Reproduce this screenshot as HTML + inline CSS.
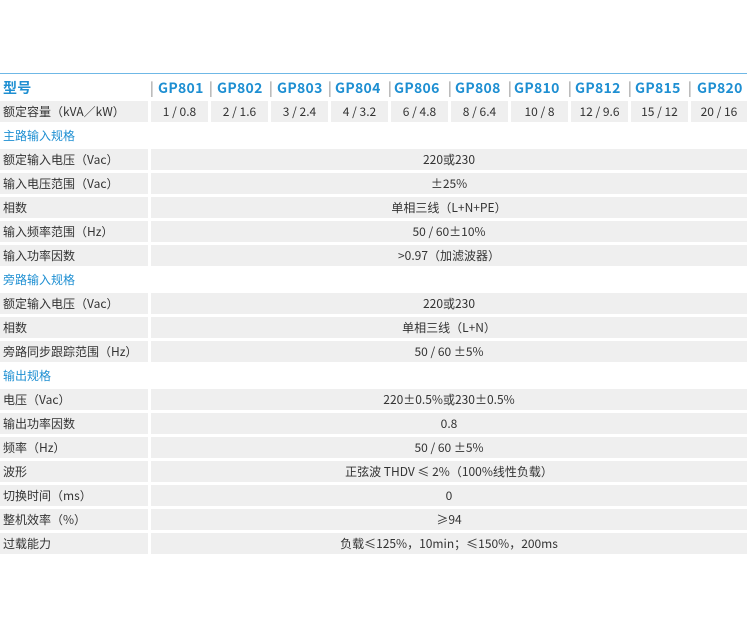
<!DOCTYPE html>
<html><head><meta charset="utf-8"><style>
*{margin:0;padding:0;box-sizing:border-box}
body{width:750px;height:630px;background:#fff;position:relative;overflow:hidden;font-family:"Noto Sans CJK SC","Liberation Sans",sans-serif;color:#333;font-size:12px}
.line{position:absolute;left:0;top:73px;width:747px;height:1px;background:#6fb8e6}
.h{position:absolute;top:78px;height:20px;line-height:20px;font-weight:bold;color:#1e8fd2;font-size:14px;letter-spacing:0.3px}
.sep{position:absolute;top:78px;line-height:20px;color:#888;font-size:14px}
.r{position:absolute;left:0;width:747px;height:21px}
.l{position:absolute;left:0;top:0;width:148px;height:21px;background:#efefef;line-height:21px;padding-left:3px;white-space:nowrap}
.v{position:absolute;left:151px;top:0;width:596px;height:21px;background:#efefef;line-height:21px;text-align:center}
.s{position:absolute;left:3px;line-height:21px;color:#1e8fd2}
.c{position:absolute;top:0;height:21px;background:#efefef;line-height:21px;text-align:center}
</style></head><body>
<div class="line"></div>
<div class="h" style="left:3px">型号</div>
<div class="sep" style="left:150px">|</div><div class="h" style="left:158px">GP801</div>
<div class="sep" style="left:209px">|</div><div class="h" style="left:217px">GP802</div>
<div class="sep" style="left:269px">|</div><div class="h" style="left:277px">GP803</div>
<div class="sep" style="left:328px">|</div><div class="h" style="left:335px">GP804</div>
<div class="sep" style="left:388px">|</div><div class="h" style="left:394px">GP806</div>
<div class="sep" style="left:448px">|</div><div class="h" style="left:455px">GP808</div>
<div class="sep" style="left:508px">|</div><div class="h" style="left:514px">GP810</div>
<div class="sep" style="left:568px">|</div><div class="h" style="left:575px">GP812</div>
<div class="sep" style="left:628px">|</div><div class="h" style="left:635px">GP815</div>
<div class="sep" style="left:688px">|</div><div class="h" style="left:697px">GP820</div>

<div class="r" style="top:101px"><div class="l">额定容量（kVA／kW）</div>
<div class="c" style="left:151px;width:57px">1 / 0.8</div>
<div class="c" style="left:211px;width:57px">2 / 1.6</div>
<div class="c" style="left:271px;width:57px">3 / 2.4</div>
<div class="c" style="left:331px;width:57px">4 / 3.2</div>
<div class="c" style="left:391px;width:57px">6 / 4.8</div>
<div class="c" style="left:451px;width:57px">8 / 6.4</div>
<div class="c" style="left:511px;width:57px">10 / 8</div>
<div class="c" style="left:571px;width:57px">12 / 9.6</div>
<div class="c" style="left:631px;width:57px">15 / 12</div>
<div class="c" style="left:691px;width:56px">20 / 16</div></div>

<div class="s" style="top:125px">主路输入规格</div>
<div class="r" style="top:149px"><div class="l">额定输入电压（Vac）</div><div class="v">220或230</div></div>
<div class="r" style="top:173px"><div class="l">输入电压范围（Vac）</div><div class="v">±25%</div></div>
<div class="r" style="top:197px"><div class="l">相数</div><div class="v">单相三线（L+N+PE）</div></div>
<div class="r" style="top:221px"><div class="l">输入频率范围（Hz）</div><div class="v">50 / 60±10%</div></div>
<div class="r" style="top:245px"><div class="l">输入功率因数</div><div class="v">&gt;0.97（加滤波器）</div></div>
<div class="s" style="top:269px">旁路输入规格</div>
<div class="r" style="top:293px"><div class="l">额定输入电压（Vac）</div><div class="v">220或230</div></div>
<div class="r" style="top:317px"><div class="l">相数</div><div class="v">单相三线（L+N）</div></div>
<div class="r" style="top:341px"><div class="l">旁路同步跟踪范围（Hz）</div><div class="v">50 / 60 ±5%</div></div>
<div class="s" style="top:365px">输出规格</div>
<div class="r" style="top:389px"><div class="l">电压（Vac）</div><div class="v">220±0.5%或230±0.5%</div></div>
<div class="r" style="top:413px"><div class="l">输出功率因数</div><div class="v">0.8</div></div>
<div class="r" style="top:437px"><div class="l">频率（Hz）</div><div class="v">50 / 60 ±5%</div></div>
<div class="r" style="top:461px"><div class="l">波形</div><div class="v">正弦波 THDV ≤ 2%（100%线性负载）</div></div>
<div class="r" style="top:485px"><div class="l">切换时间（ms）</div><div class="v">0</div></div>
<div class="r" style="top:509px"><div class="l">整机效率（%）</div><div class="v">≥94</div></div>
<div class="r" style="top:533px"><div class="l">过载能力</div><div class="v">负载≤125%，10min；≤150%，200ms</div></div>
</body></html>
